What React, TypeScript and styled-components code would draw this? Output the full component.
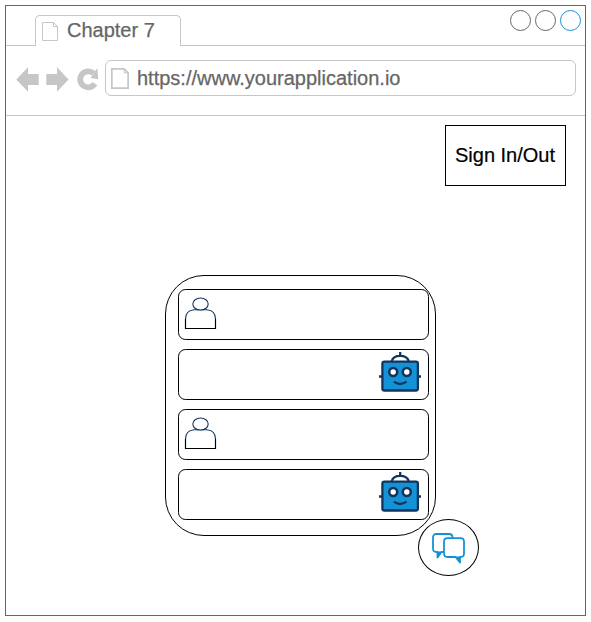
import React from 'react';
import styled, { createGlobalStyle } from 'styled-components';

const colors = {
  frame: '#666',
  chrome: '#c4c6c8',
  ink: '#000',
  navy: '#12355f',
  blue: '#1592d6',
};

const GlobalStyle = createGlobalStyle`
  *, *::before, *::after { box-sizing: border-box; }
  body {
    margin: 0;
    background: #fff;
    font-family: "Liberation Sans", Arial, sans-serif;
    font-size: 20px;
    line-height: 24px;
  }
  svg { display: block; flex: none; overflow: visible; }
`;

const BrowserWindow = styled.div`
  display: flex;
  flex-direction: column;
  width: 581px;
  height: 611px;
  margin: 5px;
  border: 1px solid ${colors.frame};
`;

const TabStrip = styled.header`
  display: flex;
  align-items: flex-end;
  height: 40px;
`;

const StripLine = styled.div<{ $width?: number }>`
  ${({ $width }) => ($width ? `width: ${$width}px;` : 'flex: 1;')}
  height: 40px;
  border-bottom: 1px solid ${colors.chrome};
`;

const StripEnd = styled(StripLine)`
  display: flex;
  justify-content: flex-end;
  gap: 4px;
  padding: 4px 4px 0 0;
`;

const Tab = styled.div`
  display: flex;
  width: 146px;
  height: 31px;
  padding: 6px 0 0 6px;
  border: 1px solid ${colors.chrome};
  border-bottom: 0;
  border-radius: 5px 5px 0 0;
  color: ${colors.frame};
`;

const TabTitle = styled.span`
  margin: -4px 0 0 9px;
  white-space: nowrap;
  -webkit-text-stroke: 0.25px;
`;

const WindowDot = styled.span<{ $color: string }>`
  width: 21px;
  height: 21px;
  border: 1px solid ${({ $color }) => $color};
  border-radius: 50%;
`;

const Toolbar = styled.nav`
  display: flex;
  height: 70px;
  padding: 14px 0 0 10px;
  border-bottom: 1px solid ${colors.chrome};
`;

const AddressBar = styled.div`
  display: flex;
  width: 471px;
  height: 36px;
  margin-left: 7px;
  padding: 7px 0 0 5px;
  border: 1px solid ${colors.chrome};
  border-radius: 6px;
  color: ${colors.frame};
`;

const Url = styled.span`
  margin: -2px 0 0 8px;
  white-space: nowrap;
  -webkit-text-stroke: 0.25px;
`;

const Page = styled.main`
  display: flex;
  flex-direction: column;
  padding-top: 9px;
`;

const SignButton = styled.button`
  align-self: flex-end;
  width: 121px;
  height: 61px;
  margin-right: 19px;
  padding: 0 1px 2px 0;
  border: 1px solid ${colors.ink};
  background: #fff;
  color: ${colors.ink};
  font: inherit;
  white-space: nowrap;
  -webkit-text-stroke: 0.2px;
`;

const ChatPanel = styled.section`
  display: flex;
  flex-direction: column;
  gap: 9px;
  width: 271px;
  height: 261px;
  margin: 89px 0 0 159px;
  padding: 13px 0 0 12px;
  border: 1px solid ${colors.ink};
  border-radius: 39px;
`;

const Message = styled.div<{ $bot: boolean }>`
  display: flex;
  justify-content: ${({ $bot }) => ($bot ? 'flex-end' : 'flex-start')};
  width: 251px;
  height: 51px;
  padding: ${({ $bot }) => ($bot ? '1px 6px 0' : '7px 6px 0')};
  border: 1px solid ${colors.ink};
  border-radius: 7.5px;
`;

const ChatButton = styled.button`
  display: flex;
  align-items: flex-start;
  width: 61px;
  height: 57px;
  margin: -17px 0 0 412px;
  padding: 12.5px 0 0 13px;
  border: 1px solid ${colors.ink};
  border-radius: 50%;
  background: #fff;
`;

const PageIcon = ({ width, height, stroke }: { width: number; height: number; stroke: number }) => {
  const s = stroke / 2;
  const r = width - s;
  return (
    <svg width={width} height={height} fill="none" stroke={colors.chrome} strokeWidth={stroke}>
      <path d={`M${s} ${s}H${r - 4}L${r} ${s + 4}V${height - s}H${s}Z`} />
      <path d={`M${r - 4} ${s}V${s + 4}H${r}`} strokeWidth="1" />
    </svg>
  );
};

const NavIcons = () => (
  <svg width="82" height="36" fill={colors.chrome}>
    <path d="M.3 19.5 12 7.3V14H22.7V25H12V31.7Z" />
    <path d="M30.3 14H41V7.3L52.5 19.5 41 31.7V25H30.3Z" />
    <path d="M78.9 23.7A8 8 0 1 1 77.6 13.4" fill="none" stroke={colors.chrome} strokeWidth="5.8" />
    <path d="M81.3 8 82.3 19.2 74.5 18Z" />
  </svg>
);

const PersonIcon = () => (
  <svg width="31" height="32" fill="#fff" stroke={colors.navy} strokeWidth="1.1">
    <path d="M.5 31.5V22Q.5 13.5 9 12.7H22Q30.5 13.5 30.5 22V31.5Z" />
    <ellipse cx="15.5" cy="7" rx="7.7" ry="6" />
    <path d="M.5 22V31.5H30.5V22" fill="none" stroke={colors.ink} />
  </svg>
);

const RobotIcon = () => (
  <svg width="43" height="42" fill="none" stroke={colors.navy} strokeWidth="2.3">
    <path d="M12.7 10C14 6 17 4.8 21.2 4.8S28.3 6 29.8 10M21.2 1V5M0 25.5H4M38 25.5H42" />
    <rect x="3.4" y="10.7" width="35.5" height="28.8" rx="2" fill={colors.blue} />
    <g fill="#fff" strokeWidth="2.6">
      <circle cx="14.2" cy="21" r="4" />
      <circle cx="27.8" cy="21" r="4" />
    </g>
    <path d="M15 30.5C18 33.8 24 33.8 27.5 30.5" />
  </svg>
);

const ChatIcon = () => (
  <svg width="34" height="32" fill="#fff" stroke={colors.blue} strokeWidth="1.8" strokeLinejoin="round">
    <path d="M4.5 1H17Q20.5 1 20.5 4.5V15.5Q20.5 19 17 19H9.5L5.5 24.5V19H4.5Q1 19 1 15.5V4.5Q1 1 4.5 1Z" />
    <path d="M15.5 5.2H28.5Q32 5.2 32 8.7V20.5Q32 24 28.5 24H28V29.5L23.5 24H15.5Q12 24 12 20.5V8.7Q12 5.2 15.5 5.2Z" />
    <path d="M5.5 19V24.5L9.5 19ZM23.5 24 28 29.5V24Z" fill={colors.blue} strokeWidth="1" />
  </svg>
);

const messages = ['user', 'bot', 'user', 'bot'];

export default function App() {
  return (
    <>
      <GlobalStyle />
      <BrowserWindow>
        <TabStrip>
          <StripLine $width={29} />
          <Tab>
            <PageIcon width={16} height={19} stroke={1} />
            <TabTitle>Chapter 7</TabTitle>
          </Tab>
          <StripEnd>
            <WindowDot $color={colors.frame} />
            <WindowDot $color={colors.frame} />
            <WindowDot $color={colors.blue} />
          </StripEnd>
        </TabStrip>
        <Toolbar>
          <NavIcons />
          <AddressBar>
            <PageIcon width={18} height={21} stroke={1.7} />
            <Url>https://www.yourapplication.io</Url>
          </AddressBar>
        </Toolbar>
        <Page>
          <SignButton>Sign In/Out</SignButton>
          <ChatPanel>
            {messages.map((author, i) => (
              <Message key={i} $bot={author === 'bot'}>
                {author === 'bot' ? <RobotIcon /> : <PersonIcon />}
              </Message>
            ))}
          </ChatPanel>
          <ChatButton aria-label="Chat">
            <ChatIcon />
          </ChatButton>
        </Page>
      </BrowserWindow>
    </>
  );
}
